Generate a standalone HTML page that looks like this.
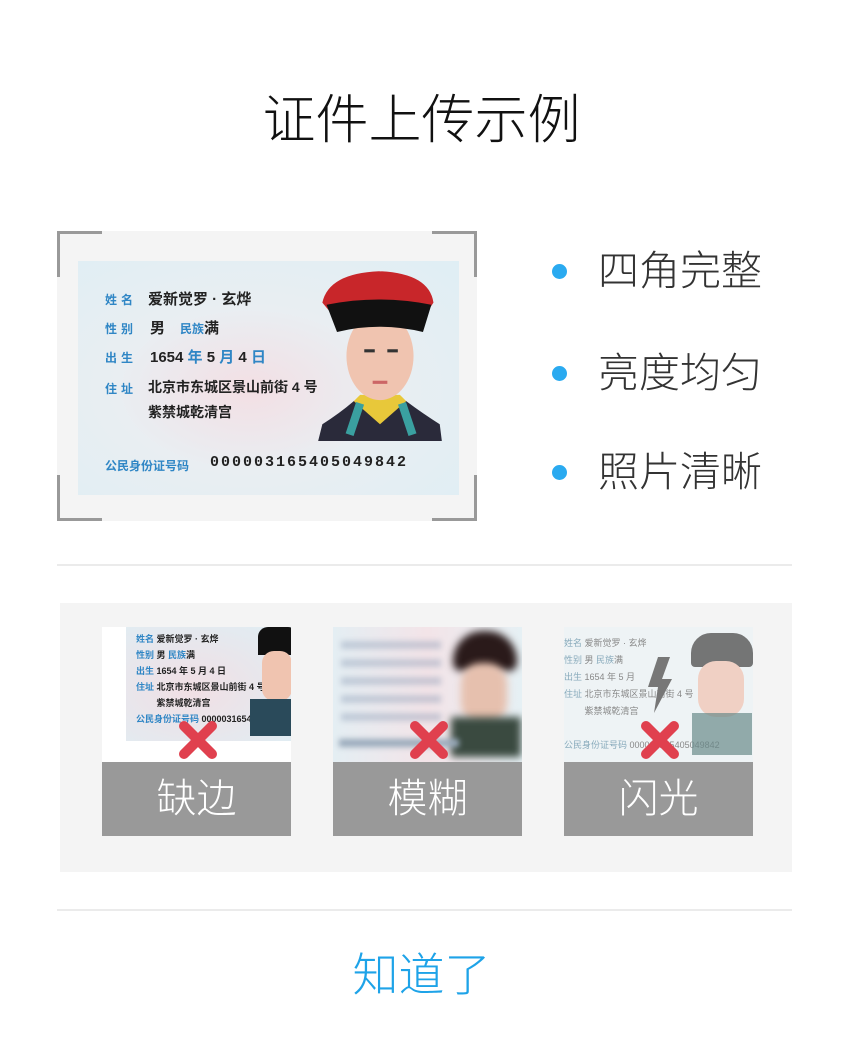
<!DOCTYPE html>
<html><head><meta charset="utf-8"><style>
*{margin:0;padding:0;box-sizing:border-box}
body{width:843px;height:1044px;background:#fff;position:relative;overflow:hidden;font-family:"Liberation Sans","Noto Sans CJK SC",sans-serif;}
.abs{position:absolute}
.t{font-weight:300;white-space:nowrap}
.card{position:absolute;left:0;top:0;width:381px;height:234px;overflow:hidden;
background:radial-gradient(ellipse at 45% 55%,#f3dfe4 0%,#e9eef2 45%,#dfeef4 100%);font-weight:bold}
.card .l{position:absolute;color:#2f86c5;font-size:12px;letter-spacing:4px}
.card .v{position:absolute;color:#222;font-size:15px;white-space:nowrap}
.ph{position:absolute;left:240px;top:6px;width:124px;height:174px}
.thumb{position:absolute;width:189px;height:135px;overflow:hidden;background:#fff}
.lab{position:absolute;width:189px;height:74px;background:#999;color:#fff;font-size:40px;font-weight:300;text-align:center;line-height:74px}
.x{position:absolute;width:44px;height:44px}
</style></head><body>
<div class="abs t" style="left:0;width:843px;top:88px;text-align:center;font-size:53px;color:#111;line-height:66px">证件上传示例</div>

<div class="abs" style="left:57px;top:231px;width:420px;height:290px;background:#f4f4f4"></div>
<div class="abs" style="left:57px;top:231px;width:45px;height:46px;border-left:3px solid #999;border-top:3px solid #999"></div>
<div class="abs" style="left:432px;top:231px;width:45px;height:46px;border-right:3px solid #999;border-top:3px solid #999"></div>
<div class="abs" style="left:57px;top:475px;width:45px;height:46px;border-left:3px solid #999;border-bottom:3px solid #999"></div>
<div class="abs" style="left:432px;top:475px;width:45px;height:46px;border-right:3px solid #999;border-bottom:3px solid #999"></div>

<div class="abs" style="left:78px;top:261px;width:381px;height:234px">
<div class="card">
<div class="l" style="left:27px;top:30px">姓名</div><div class="v" style="left:70px;top:27px">爱新觉罗 · 玄烨</div>
<div class="l" style="left:27px;top:59px">性别</div><div class="v" style="left:72px;top:56px">男　<span style="color:#2f86c5;font-size:12px">民族</span>满</div>
<div class="l" style="left:27px;top:88px">出生</div><div class="v" style="left:72px;top:85px">1654 <span style="color:#2f86c5">年</span> 5 <span style="color:#2f86c5">月</span> 4 <span style="color:#2f86c5">日</span></div>
<div class="l" style="left:27px;top:119px">住址</div><div class="v" style="left:70px;top:116px;font-size:14px">北京市东城区景山前街 4 号</div>
<div class="v" style="left:70px;top:141px;font-size:14px">紫禁城乾清宫</div>
<div class="l" style="left:27px;top:196px;letter-spacing:0;font-size:12px">公民身份证号码</div><div class="v" style="left:132px;top:193px;letter-spacing:2px;font-family:'Liberation Mono',monospace">000003165405049842</div>
<svg class="ph" viewBox="0 0 118 166"><path d="M0 166 L4 150 Q20 140 34 128 L84 128 Q100 140 116 150 L118 166Z" fill="#2a2a3a"/><path d="M34 128 L59 150 L84 128 L78 122 L40 122Z" fill="#e8c83a"/><path d="M40 130 L30 160 M80 130 L90 160" stroke="#3aa0a0" stroke-width="8"/><ellipse cx="59" cy="85" rx="32" ry="42" fill="#f0c4b0"/><path d="M4 34 Q10 6 58 4 Q106 6 110 34 L102 46 Q60 40 14 46Z" fill="#c8262a"/><path d="M8 36 Q58 26 108 36 L100 62 Q58 52 18 62Z" fill="#111"/><path d="M44 80 h10 M66 80 h10" stroke="#333" stroke-width="3"/><path d="M52 110 h14" stroke="#c66" stroke-width="3"/></svg>
</div></div>

<div class="abs" style="left:552px;top:264px;width:15px;height:15px;border-radius:50%;background:#2aaaf0"></div>
<div class="abs" style="left:552px;top:366px;width:15px;height:15px;border-radius:50%;background:#2aaaf0"></div>
<div class="abs" style="left:552px;top:465px;width:15px;height:15px;border-radius:50%;background:#2aaaf0"></div>
<div class="abs t" style="left:598px;top:245px;font-size:41px;color:#333;line-height:52px">四角完整</div>
<div class="abs t" style="left:598px;top:347px;font-size:41px;color:#333;line-height:52px">亮度均匀</div>
<div class="abs t" style="left:598px;top:446px;font-size:41px;color:#333;line-height:52px">照片清晰</div>

<div class="abs" style="left:57px;top:564px;width:735px;height:2px;background:#ebebeb"></div>
<div class="abs" style="left:60px;top:603px;width:732px;height:269px;background:#f4f4f4"></div>

<div class="thumb" style="left:102px;top:627px">
 <div style="position:absolute;left:24px;top:0;width:165px;height:114px;background:radial-gradient(ellipse at 40% 55%,#f1dfe4,#dfeef4);overflow:hidden">
  <div style="position:absolute;left:10px;top:4px;font-size:9px;color:#222;font-weight:bold;line-height:16px;white-space:nowrap"><span style="color:#2f86c5">姓名</span> 爱新觉罗 · 玄烨<br><span style="color:#2f86c5">性别</span> 男 <span style="color:#2f86c5">民族</span>满<br><span style="color:#2f86c5">出生</span> 1654 年 5 月 4 日<br><span style="color:#2f86c5">住址</span> 北京市东城区景山前街 4 号<br>　　 紫禁城乾清宫<br><span style="color:#2f86c5">公民身份证号码</span> 000003165405049842</div>
  <div style="position:absolute;left:132px;top:0;width:40px;height:28px;background:#111;border-radius:10px 10px 0 0"></div>
  <div style="position:absolute;left:136px;top:24px;width:30px;height:50px;background:#f0c4b0;border-radius:12px"></div>
  <div style="position:absolute;left:124px;top:72px;width:45px;height:37px;background:#2a4a5a"></div>
 </div>
</div>
<div class="lab" style="left:102px;top:762px">缺边</div>
<div class="thumb" style="left:333px;top:627px;background:linear-gradient(90deg,#e4eef3,#f3e4e8 50%,#e6f0f4)">
 <div style="position:absolute;left:8px;top:14px;width:100px;height:90px;background:repeating-linear-gradient(180deg,rgba(120,140,170,.35) 0 8px,transparent 8px 18px);filter:blur(3px)"></div>
 <div style="position:absolute;left:120px;top:4px;width:64px;height:40px;background:#2a1a1a;border-radius:30px 30px 8px 8px;filter:blur(4px)"></div>
 <div style="position:absolute;left:128px;top:36px;width:46px;height:60px;background:#e6c0ae;border-radius:20px;filter:blur(4px)"></div>
 <div style="position:absolute;left:118px;top:90px;width:70px;height:40px;background:#3a4a40;filter:blur(4px)"></div>
 <div style="position:absolute;left:6px;top:112px;width:120px;height:8px;background:#9ab;filter:blur(3px)"></div>
</div>
<div class="lab" style="left:333px;top:762px">模糊</div>
<div class="thumb" style="left:564px;top:627px;background:#eef3f5">
  <div style="position:absolute;left:0;top:8px;font-size:9px;color:#888;line-height:17px;white-space:nowrap"><span style="color:#8ab">姓名</span> 爱新觉罗 · 玄烨<br><span style="color:#8ab">性别</span> 男 <span style="color:#8ab">民族</span>满<br><span style="color:#8ab">出生</span> 1654 年 5 月<br><span style="color:#8ab">住址</span> 北京市东城区景山前街 4 号<br>　　 紫禁城乾清宫<br><br><span style="color:#8ab">公民身份证号码</span> 000003165405049842</div>
  <div style="position:absolute;left:127px;top:6px;width:62px;height:34px;background:#555;border-radius:20px 20px 4px 4px;opacity:.8"></div>
  <div style="position:absolute;left:134px;top:34px;width:46px;height:56px;background:#f0d0c4;border-radius:18px"></div>
  <div style="position:absolute;left:128px;top:86px;width:60px;height:42px;background:#6a8a8a;opacity:.7"></div>
  <svg style="position:absolute;left:80px;top:30px" width="30" height="56" viewBox="0 0 30 56"><path d="M14 0 L26 0 L18 22 L28 22 L10 56 L14 30 L4 30Z" fill="#777"/></svg>
</div>
<div class="lab" style="left:564px;top:762px">闪光</div>

<svg class="x" style="left:176px;top:718px" viewBox="0 0 44 44"><path d="M8 8 L36 36 M36 8 L8 36" stroke="#e0404e" stroke-width="10" stroke-linecap="round"/></svg>
<svg class="x" style="left:407px;top:718px" viewBox="0 0 44 44"><path d="M8 8 L36 36 M36 8 L8 36" stroke="#e0404e" stroke-width="10" stroke-linecap="round"/></svg>
<svg class="x" style="left:638px;top:718px" viewBox="0 0 44 44"><path d="M8 8 L36 36 M36 8 L8 36" stroke="#e0404e" stroke-width="10" stroke-linecap="round"/></svg>

<div class="abs" style="left:57px;top:909px;width:735px;height:2px;background:#ebebeb"></div>
<div class="abs t" style="left:0;width:843px;top:945px;text-align:center;font-size:46px;color:#1ea3e8;line-height:60px">知道了</div>
</body></html>
